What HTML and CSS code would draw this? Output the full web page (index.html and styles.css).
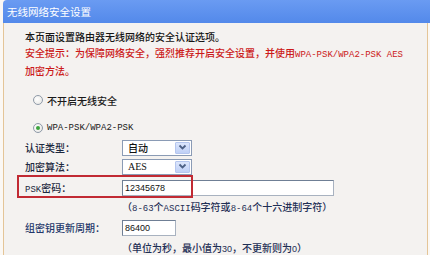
FILE: index.html
```html
<!DOCTYPE html>
<html>
<head>
<meta charset="utf-8">
<link rel="stylesheet" href="styles.css">
</head>
<body>
<div class="panel">
  <div class="title">无线网络安全设置</div>
  <div class="body">
    <p class="intro">本页面设置路由器无线网络的安全认证选项。</p>
    <p class="warn">安全提示：为保障网络安全，强烈推荐开启安全设置，并使用<span class="mono">WPA-PSK/WPA2-PSK AES</span><br>加密方法。</p>
    <div class="radio-row r-off"><span class="radio"></span><span>不开启无线安全</span></div>
    <div class="radio-row r-wpa"><span class="radio checked"></span><span class="mono">WPA-PSK/WPA2-PSK</span></div>
    <div class="row r-auth">
      <span class="lbl">认证类型：</span>
      <div class="select"><span class="val">自动</span><span class="arrow"><svg width="9" height="7" viewBox="0 0 9 7"><path d="M1.5 1.5 L4.5 4.5 L7.5 1.5" fill="none" stroke="#4d6185" stroke-width="1.8"/></svg></span></div>
    </div>
    <div class="row r-enc">
      <span class="lbl">加密算法：</span>
      <div class="select"><span class="val serif">AES</span><span class="arrow"><svg width="9" height="7" viewBox="0 0 9 7"><path d="M1.5 1.5 L4.5 4.5 L7.5 1.5" fill="none" stroke="#4d6185" stroke-width="1.8"/></svg></span></div>
    </div>
    <div class="row r-psk">
      <span class="lbl"><span class="mono">PSK</span>密码：</span>
      <div class="input wide">12345678</div>
      <span class="mark"></span>
    </div>
    <div class="hint h1">（<span class="mono">8-63</span>个<span class="mono">ASCII</span>码字符或<span class="mono">8-64</span>个十六进制字符）</div>
    <div class="row r-grp">
      <span class="lbl">组密钥更新周期：</span>
      <div class="input short">86400</div>
    </div>
    <div class="hint h2">（单位为秒，最小值为<span class="num">30</span>，不更新则为<span class="num">0</span>）</div>
  </div>
</div>
</body>
</html>
```

FILE: styles.css
```css
html, body {
  margin: 0;
  padding: 0;
  background: #fbf8f4;
  width: 430px;
  height: 255px;
  overflow: hidden;
  font-family: "Noto Sans CJK SC", "Noto Sans", sans-serif;
  font-size: 10px;
  font-weight: 500;
}

.panel {
  margin-left: 3px;
  width: 427px;
}

.title {
  height: 23px;
  line-height: 23px;
  background: linear-gradient(#6a9bf2, #5389ea);
  border-top-left-radius: 4px;
  color: #ffffff;
  font-size: 10.5px;
  font-weight: 400;
  padding-left: 4px;
  box-sizing: border-box;
}

.body {
  width: 425px;
  height: 232px;
  box-sizing: border-box;
  border-left: 1px solid #e4c597;
  border-right: 1px solid #e4c597;
  background: #f4f2f0;
  padding: 6px 0 0 21px;
  color: #1a1a1a;
}

p {
  margin: 0;
  line-height: 16px;
  white-space: nowrap;
}

.intro {
  color: #151515;
}

.warn {
  color: #cc1a1a;
}

.mono {
  font-family: "Liberation Mono", monospace;
  font-size: 9px;
  font-weight: 400;
}

.serif {
  font-family: "Liberation Serif", serif;
  font-size: 10px;
  font-weight: 400;
}

.num {
  font-family: "Liberation Sans", sans-serif;
  font-size: 9px;
  font-weight: 400;
}

.radio-row {
  display: flex;
  align-items: center;
  height: 16px;
  color: #1a1a1a;
}

.r-off { margin-top: 13px; }
.r-wpa { margin-top: 12px; }

.radio {
  width: 10px;
  height: 10px;
  box-sizing: border-box;
  border: 1px solid #8f9aa8;
  border-radius: 50%;
  background: radial-gradient(circle at 40% 40%, #ffffff, #e4e4e0);
  margin-left: 8px;
  margin-right: 4px;
  display: flex;
  align-items: center;
  justify-content: center;
}

.radio.checked::after {
  content: "";
  width: 4px;
  height: 4px;
  border-radius: 50%;
  background: #3da43d;
}

.row {
  display: flex;
  align-items: center;
  height: 19px;
  position: relative;
  color: #1d2940;
}

.r-auth { margin-top: 2px; }
.r-enc { margin-top: 0; }
.r-psk { margin-top: 1px; height: 21px; }
.r-grp { margin-top: 3px; color: #24386a; }

.lbl {
  width: 97px;
  flex: none;
  white-space: nowrap;
}

.select {
  width: 70px;
  height: 16px;
  box-sizing: border-box;
  border: 1px solid #8a9bb5;
  background: #ffffff;
  display: flex;
  align-items: center;
  justify-content: space-between;
  padding: 1px;
}

.val {
  padding-left: 4px;
  color: #111;
  line-height: 12px;
}

.arrow {
  width: 15px;
  height: 12px;
  box-sizing: border-box;
  border: 1px solid #b5c6ee;
  border-radius: 1px;
  background: linear-gradient(#dce6fc, #bfd0f6);
  display: flex;
  align-items: center;
  justify-content: center;
}

.input {
  height: 16px;
  box-sizing: border-box;
  border: 1px solid #6f7f95;
  border-right-color: #a8b2c0;
  border-bottom-color: #a8b2c0;
  background: #ffffff;
  font-family: "Liberation Sans", sans-serif;
  font-size: 9px;
  font-weight: 400;
  line-height: 14px;
  padding-left: 2px;
  color: #111;
}

.input.wide { width: 212px; }
.input.short { width: 54px; }

.mark {
  position: absolute;
  left: -8px;
  top: -2px;
  width: 176px;
  height: 23px;
  box-sizing: border-box;
  border: 2px solid #c12a33;
}

.hint {
  height: 16px;
  line-height: 16px;
  padding-left: 97px;
  color: #1f2f55;
  white-space: nowrap;
}

.h1 { margin-top: 1px; }
.h2 { margin-top: 3px; }
```
